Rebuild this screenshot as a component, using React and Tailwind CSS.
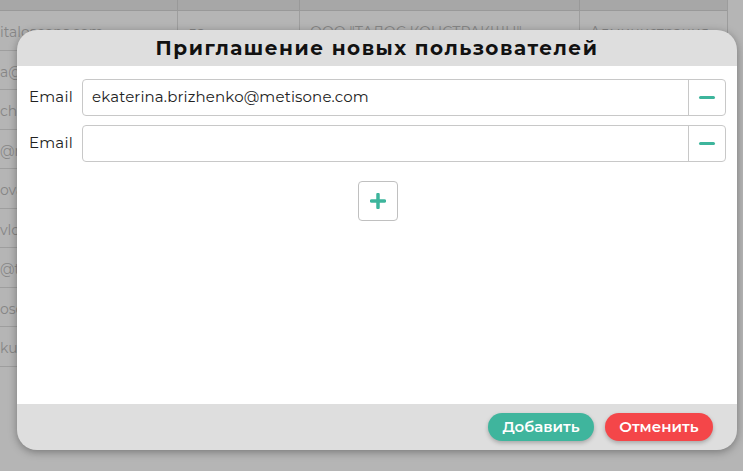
import React from 'react';

const rows = [
  ['italoscons.com', 'да', 'ООО "ТАЛОС КОНСТРАКШН"', 'Администрация'],
  ['a@talos.ru', '', '', ''],
  ['cho@talos.ru', '', '', ''],
  ['@metisone.com', '', '', ''],
  ['ova@talos.ru', '', '', ''],
  ['vlov@talos.ru', '', '', ''],
  ['@talos.ru', '', '', ''],
  ['oso@talos.ru', '', '', ''],
  ['kul@talos.ru', '', '', ''],
];

const font = { fontFamily: 'Montserrat, Inter, "Noto Sans", sans-serif' };

const EmailRow = ({ value }) => (
  <div className="flex items-center gap-[9px]">
    <label className="w-[44px] text-[15px] tracking-[0.2px] text-[#222]">Email</label>
    <div className="flex h-[37px] flex-1 rounded-[4px] border border-[#c8c8c8] bg-white">
      <input
        readOnly
        value={value}
        className="min-w-0 flex-1 bg-transparent px-[9px] text-[15px] tracking-[0.15px] text-[#222] outline-none"
        style={font}
      />
      <button className="flex w-[37px] items-center justify-center border-l border-[#c8c8c8]">
        <span className="block h-[3px] w-[16px] rounded-sm bg-[#3db59c]" />
      </button>
    </div>
  </div>
);

export default function App() {
  return (
    <div className="relative h-[471px] w-[743px] overflow-hidden bg-[#b5b5b5]" style={font}>
      {/* table behind the overlay */}
      <div className="w-[728px] border-r border-[#9c9c9c]">
        <div className="grid h-[11px] grid-cols-[178px_122px_280px_1fr] border-b border-[#999] bg-[#a7a7a7]">
          <div className="border-r border-[#999]" />
          <div className="border-r border-[#999]" />
          <div className="border-r border-[#999]" />
          <div />
        </div>
        {rows.map((r, i) => (
          <div
            key={i}
            className="grid h-[39.5px] grid-cols-[178px_122px_280px_1fr] border-b border-[#9e9e9e] text-[14px] text-[#868686]"
          >
            {r.map((c, j) => (
              <div
                key={j}
                className={`flex items-center overflow-hidden whitespace-nowrap pt-[5px] ${j === 0 ? 'pl-0' : 'pl-[10px]'} ${j < 3 ? 'border-r border-[#9e9e9e]' : ''}`}
              >
                {c}
              </div>
            ))}
          </div>
        ))}
      </div>

      {/* modal */}
      <div className="absolute left-[17px] top-[30px] flex h-[420px] w-[720px] flex-col overflow-hidden rounded-[20px] bg-[#dedede] shadow-[0_2px_8px_rgba(0,0,0,0.35)]">
        <div className="flex h-[36px] items-center justify-center">
          <h2 className="text-[20px] font-bold tracking-[1.5px] text-[#111]">Приглашение новых пользователей</h2>
        </div>
        <div className="flex flex-1 flex-col gap-[9px] bg-white pl-[12px] pr-[11px] pt-[13px]">
          <EmailRow value="ekaterina.brizhenko@metisone.com" />
          <EmailRow value="" />
          <div className="flex justify-center pt-[10px]">
            <button className="flex h-[40px] w-[40px] items-center justify-center rounded-[4px] border border-[#c0c0c0] bg-white">
              <svg width="16" height="16" viewBox="0 0 16 16">
                <path d="M8 1.5v13M1.5 8h13" stroke="#3db59c" strokeWidth="3.5" strokeLinecap="round" />
              </svg>
            </button>
          </div>
        </div>
        <div className="flex h-[46px] items-center justify-end gap-[11px] pr-[24px]">
          <button className="h-[28px] w-[106px] rounded-full bg-[#3fb59d] text-[15px] font-semibold text-white shadow-[0_2px_4px_rgba(0,0,0,0.25)]">
            Добавить
          </button>
          <button className="h-[28px] w-[108px] rounded-full bg-[#f44649] text-[15px] font-semibold text-white shadow-[0_2px_4px_rgba(0,0,0,0.25)]">
            Отменить
          </button>
        </div>
      </div>
    </div>
  );
}
